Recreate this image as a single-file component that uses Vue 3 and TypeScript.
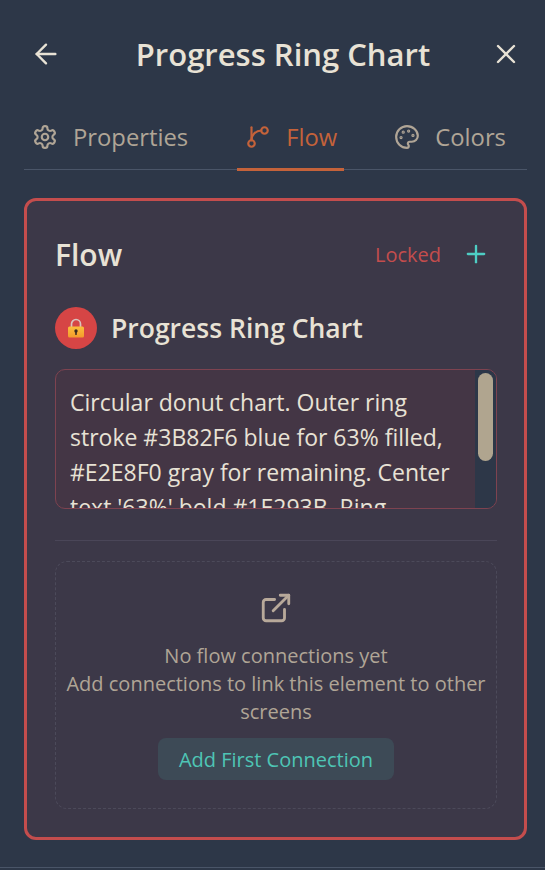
<script setup lang="ts">
const description =
  "Circular donut chart. Outer ring stroke #3B82F6 blue for 63% filled, #E2E8F0 gray for remaining. Center text '63%' bold #1E293B. Ring";
</script>

<template>
  <div class="page">
    <header class="header">
      <button class="icon-btn">
        <svg width="32" height="32" viewBox="0 0 24 24" fill="none" stroke="currentColor" stroke-width="1.8" stroke-linecap="round" stroke-linejoin="round"><path d="M19 12H5" /><path d="M12 19l-7-7 7-7" /></svg>
      </button>
      <h1 class="title">Progress Ring Chart</h1>
      <button class="icon-btn">
        <svg width="32" height="32" viewBox="0 0 24 24" fill="none" stroke="currentColor" stroke-width="1.8" stroke-linecap="round" stroke-linejoin="round"><path d="M18 6L6 18" /><path d="M6 6l12 12" /></svg>
      </button>
    </header>

    <nav class="tabs">
      <div class="tab">
        <svg width="26" height="26" viewBox="0 0 24 24" fill="none" stroke="currentColor" stroke-width="2" stroke-linecap="round" stroke-linejoin="round"><path d="M12.22 2h-.44a2 2 0 0 0-2 2v.18a2 2 0 0 1-1 1.73l-.43.25a2 2 0 0 1-2 0l-.15-.08a2 2 0 0 0-2.73.73l-.22.38a2 2 0 0 0 .73 2.73l.15.1a2 2 0 0 1 1 1.72v.51a2 2 0 0 1-1 1.74l-.15.09a2 2 0 0 0-.73 2.73l.22.38a2 2 0 0 0 2.73.73l.15-.08a2 2 0 0 1 2 0l.43.25a2 2 0 0 1 1 1.73V20a2 2 0 0 0 2 2h.44a2 2 0 0 0 2-2v-.18a2 2 0 0 1 1-1.73l.43-.25a2 2 0 0 1 2 0l.15.08a2 2 0 0 0 2.73-.73l.22-.39a2 2 0 0 0-.73-2.73l-.15-.08a2 2 0 0 1-1-1.74v-.5a2 2 0 0 1 1-1.74l.15-.09a2 2 0 0 0 .73-2.73l-.22-.38a2 2 0 0 0-2.73-.73l-.15.08a2 2 0 0 1-2 0l-.43-.25a2 2 0 0 1-1-1.73V4a2 2 0 0 0-2-2z" /><circle cx="12" cy="12" r="3" /></svg>
        <span>Properties</span>
      </div>
      <div class="tab active">
        <svg width="26" height="26" viewBox="0 0 24 24" fill="none" stroke="currentColor" stroke-width="2" stroke-linecap="round" stroke-linejoin="round"><path d="M6 3v12" /><circle cx="18" cy="6" r="3" /><circle cx="6" cy="18" r="3" /><path d="M15 6a9 9 0 0 0-9 9" /></svg>
        <span>Flow</span>
      </div>
      <div class="tab">
        <svg width="26" height="26" viewBox="0 0 24 24" fill="none" stroke="currentColor" stroke-width="2" stroke-linecap="round" stroke-linejoin="round"><circle cx="13.5" cy="6.5" r=".5" fill="currentColor" /><circle cx="17.5" cy="10.5" r=".5" fill="currentColor" /><circle cx="8.5" cy="7.5" r=".5" fill="currentColor" /><circle cx="6.5" cy="12.5" r=".5" fill="currentColor" /><path d="M12 2C6.5 2 2 6.5 2 12s4.5 10 10 10c.926 0 1.648-.746 1.648-1.688 0-.437-.18-.835-.437-1.125-.29-.289-.438-.652-.438-1.125a1.64 1.64 0 0 1 1.668-1.668h1.996c3.051 0 5.555-2.503 5.555-5.554C21.965 6.012 17.461 2 12 2z" /></svg>
        <span>Colors</span>
      </div>
    </nav>

    <section class="card">
      <div class="card-head">
        <h2 class="card-title">Flow</h2>
        <div class="card-actions">
          <span class="locked">Locked</span>
          <svg class="plus" width="28" height="28" viewBox="0 0 24 24" fill="none" stroke="currentColor" stroke-width="2" stroke-linecap="round"><path d="M12 5v14" /><path d="M5 12h14" /></svg>
        </div>
      </div>

      <div class="element">
        <span class="lock-badge">
          <svg width="18" height="20" viewBox="0 0 18 20">
            <defs><linearGradient id="lockBody" x1="0" y1="0" x2="0" y2="1"><stop offset="0" stop-color="#fbbf3c" /><stop offset="1" stop-color="#f49b2c" /></linearGradient></defs>
            <path d="M4.5 9V6a4.5 4.5 0 0 1 9 0v3" fill="none" stroke="#d9c3bd" stroke-width="1.7" />
            <rect x="1" y="8.5" width="16" height="11" rx="1.5" fill="url(#lockBody)" />
            <circle cx="9" cy="13" r="1.7" fill="#3a2a20" />
            <rect x="8.2" y="13.5" width="1.6" height="3.4" fill="#3a2a20" />
          </svg>
        </span>
        <h3 class="element-name">Progress Ring Chart</h3>
      </div>

      <div class="desc">
        <p class="desc-text">{{ description }}</p>
        <div class="track"><div class="thumb"></div></div>
      </div>

      <hr class="rule" />

      <div class="empty">
        <svg class="empty-icon" width="34" height="34" viewBox="0 0 24 24" fill="none" stroke="currentColor" stroke-width="2" stroke-linecap="round" stroke-linejoin="round"><path d="M18 13v6a2 2 0 0 1-2 2H5a2 2 0 0 1-2-2V8a2 2 0 0 1 2-2h6" /><path d="M15 3h6v6" /><path d="M10 14L21 3" /></svg>
        <p class="empty-text">No flow connections yet<br />Add connections to link this element to other screens</p>
        <button class="add-btn">Add First Connection</button>
      </div>
    </section>
    <div class="bottom-line"></div>
  </div>
</template>

<style>
html, body { margin: 0; background: #2d3748; }
</style>

<style scoped>
.page {
  box-sizing: border-box;
  width: 545px;
  height: 870px;
  padding: 24px 18px 0 24px;
  background: #2d3748;
  font-family: "Open Sans", "Noto Sans", sans-serif;
  color: #e8e2d5;
  display: flex;
  flex-direction: column;
  overflow: hidden;
  position: relative;
}
.header {
  display: flex;
  align-items: center;
  justify-content: space-between;
  height: 60px;
  padding: 0 5px 0 6px;
}
.icon-btn {
  border: 0;
  background: none;
  padding: 0;
  color: #e8e2d5;
  display: flex;
}
.title { margin: 0 0 0 14px; font-size: 31px; font-weight: 600; }
.tabs {
  display: flex;
  gap: 42px;
  box-sizing: border-box;
  height: 58px;
  margin-top: 28px;
  border-bottom: 1px solid #4a5568;
}
.tab {
  display: flex;
  align-items: center;
  gap: 15px;
  font-size: 23.8px;
  color: #b0a596;
  padding: 0 7px 8px 8px;
  position: relative;
}
.tab.active { color: #c4623a; }
.tab.active::after {
  content: "";
  position: absolute;
  left: 0;
  right: 0;
  bottom: -2px;
  height: 3px;
  background: #c4623a;
}
.card {
  margin-top: 28px;
  box-sizing: border-box;
  height: 642px;
  border: 3px solid #c44d4d;
  border-radius: 12px;
  background: #3c3848;
  padding: 29px 27px 28px 28px;
  display: flex;
  flex-direction: column;
}
.card-head { display: flex; align-items: center; justify-content: space-between; height: 48px; }
.card-title { margin: 0; font-size: 30px; font-weight: 600; color: #e8e2d5; }
.card-actions { display: flex; align-items: center; gap: 21px; padding-right: 7px; }
.locked { font-size: 20px; color: #c44d4d; }
.plus { color: #4ecdc4; }
.element { display: flex; align-items: center; gap: 14px; margin-top: 29px; }
.lock-badge {
  width: 42px;
  height: 42px;
  border-radius: 50%;
  background: #d64545;
  display: flex;
  align-items: center;
  justify-content: center;
}
.element-name { margin: 0; font-size: 26.5px; font-weight: 600; color: #e8e2d5; }
.desc {
  margin-top: 20px;
  height: 140px;
  box-sizing: border-box;
  border: 1px solid #7e4350;
  border-radius: 10px;
  background: #443645;
  position: relative;
  overflow: hidden;
}
.desc-text { margin: 0; padding: 15px 14px; width: 415px; box-sizing: border-box; font-size: 23px; line-height: 35px; color: #e8e2d5; }
.track { position: absolute; top: 0; right: 0; bottom: 0; width: 21px; background: #2d3748; }
.thumb { position: absolute; top: 3px; left: 3px; width: 15px; height: 88px; border-radius: 8px; background: #b0a58f; }
.rule { border: 0; border-top: 1px solid #4a4658; margin: 31px 0 20px; width: 100%; }
.empty {
  box-sizing: border-box;
  height: 248px;
  border: 1px dashed #4c4a5a;
  border-radius: 12px;
  display: flex;
  flex-direction: column;
  align-items: center;
  padding: 29px 8px 0;
  text-align: center;
}
.empty-icon { color: #b8a99a; flex: none; }
.empty-text { margin: 17px 0 12px; font-size: 20px; line-height: 28px; color: #b0a596; }
.add-btn {
  border: 0;
  height: 42px;
  padding: 1px 21px 0;
  border-radius: 8px;
  background: #3d4a56;
  color: #4ec5b5;
  font: inherit;
  font-size: 20px;
}
.bottom-line { position: absolute; left: 0; right: 0; bottom: 2px; height: 1px; background: #4a5568; }
</style>
